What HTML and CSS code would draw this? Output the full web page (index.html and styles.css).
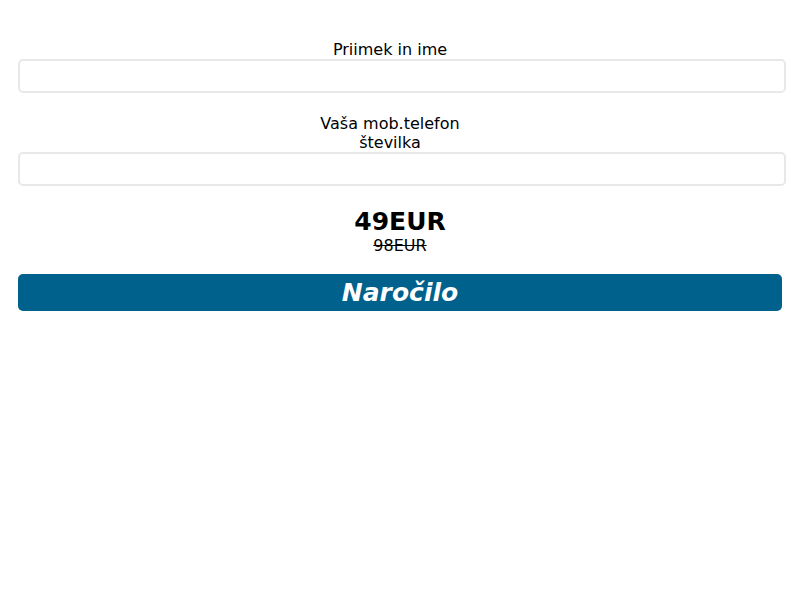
FILE: index.html
```html
<!DOCTYPE html>
<html>
<head>
<meta charset="utf-8">
<link rel="stylesheet" href="styles.css">
</head>
<body>
<form class="order-form">
  <div class="field">
    <label class="field-label">Priimek in ime</label>
    <input class="field-input" type="text">
  </div>
  <div class="field">
    <label class="field-label">Vaša mob.telefon številka</label>
    <input class="field-input" type="text">
  </div>
  <div class="price">
    <div class="price-new">49EUR</div>
    <div class="price-old">98EUR</div>
  </div>
  <button class="order-btn" type="button">Naročilo</button>
</form>
</body>
</html>
```
FILE: styles.css
```css
html, body {
  margin: 0;
  padding: 0;
  background: #fff;
}
body {
  font-family: "DejaVu Sans", sans-serif;
  color: #000;
}
.order-form {
  padding: 40px 18px 0 18px;
  display: flex;
  flex-direction: column;
  align-items: flex-start;
}
.field {
  align-self: stretch;
  display: flex;
  flex-direction: column;
  align-items: center;
  margin-bottom: 21px;
}
.field-label {
  font-size: 16px;
  line-height: 19px;
  text-align: center;
  max-width: 160px;
  margin: 0 20px 0 0;
}
.field-input {
  align-self: flex-start;
  box-sizing: border-box;
  width: 768px;
  height: 34px;
  border: 2px solid #e8e8e8;
  border-radius: 5px;
  background: #fff;
  margin: 0;
}
.price {
  align-self: stretch;
  text-align: center;
  margin-top: 1px;
}
.price-new {
  font-size: 25px;
  font-weight: bold;
  line-height: 28px;
}
.price-old {
  font-size: 16px;
  line-height: 19px;
  text-decoration: line-through;
}
.order-btn {
  margin-top: 19px;
  width: 764px;
  height: 37px;
  background: #00618c;
  color: #fff;
  border: none;
  border-radius: 5px;
  font-family: "DejaVu Sans", sans-serif;
  font-size: 25px;
  font-weight: bold;
  font-style: italic;
  padding: 0;
}
```
